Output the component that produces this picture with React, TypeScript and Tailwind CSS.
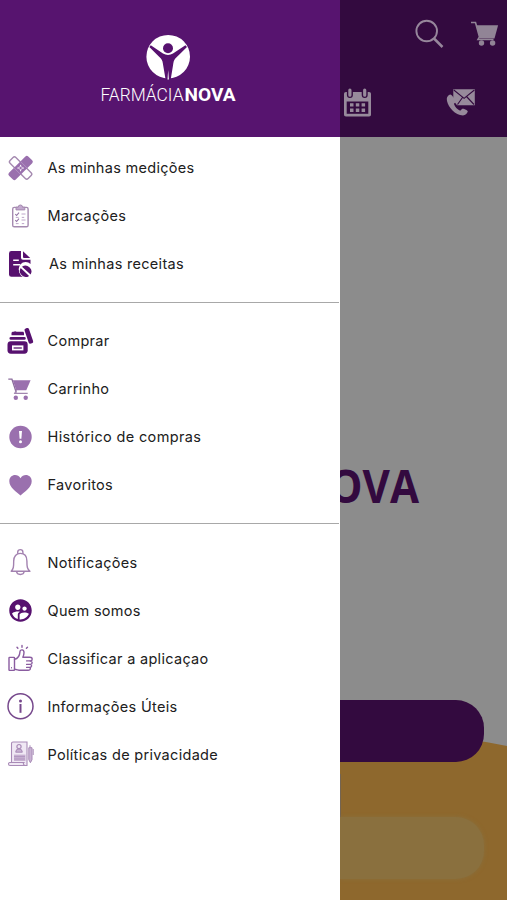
import type { ReactNode } from 'react';
import { MdSupervisedUserCircle } from 'react-icons/md';

const DARK = '#57116f';
const LILAC = '#9a70ae';

function Icon({ children }: { children: ReactNode }) {
  return (
    <svg viewBox="0 0 28 28" className="h-7 w-7 shrink-0" fill="none">
      {children}
    </svg>
  );
}

function BandageIcon() {
  return (
    <Icon>
      <g transform="rotate(45 14.6 14)">
        <rect x="1.8" y="9.9" width="25.6" height="8.2" rx="2" fill="#fff" stroke="#a58ab0" strokeWidth="1.4" />
      </g>
      <g transform="rotate(-45 14.6 14)">
        <rect x="1" y="9.2" width="27.2" height="9.6" rx="2" fill={LILAC} />
        <path d="M10 9.5v9M19.2 9.5v9" stroke="#b99bc7" strokeWidth="0.7" />
      </g>
      <path d="M14.6 11.2v.9M14.6 15.9v.9M11.8 14h.9M16.5 14h.9" stroke="#fff" strokeWidth="1.1" strokeLinecap="round" />
      <circle cx="14.6" cy="14" r="1.6" stroke="#e3d3ea" strokeWidth="0.8" />
    </Icon>
  );
}

function ClipboardIcon() {
  return (
    <Icon>
      <rect x="6.7" y="5.4" width="15.4" height="19.4" rx="1.6" stroke="#a58ab0" strokeWidth="1.4" />
      <path d="M10 7.9V5.2h2.2a2.2 2.2 0 0 1 4.4 0h2.2v2.700z" fill="#c3a9cf" stroke="#a58ab0" strokeWidth="1" strokeLinejoin="round" />
      <path d="M9.3 12.2l1.3 1.3 2.4-2.8M9.3 18.2l1.3 1.3 2.4-2.8" stroke="#9473a5" strokeWidth="1.1" />
      <path d="M15.5 12h4M9.8 15.4h2.8M15.8 15.4h2.4M15.5 18h4M9.8 21.6h2.8M15.8 21.6h2.4" stroke="#b79cc4" strokeWidth="0.9" />
    </Icon>
  );
}

function PrescriptionIcon() {
  return (
    <Icon>
      <path d="M5.4 1H15v6.8a2 2 0 0 0 2 2h7.5V14a7 7 0 0 0-9.6 10.2l2 2.6H5.4A2.4 2.4 0 0 1 3 24.400V3.400A2.400 2.400 0 0 1 5.400 1z" fill={DARK} />
      <path d="M17 1.200L24.200 8H18a1 1 0 0 1-1-1z" fill={DARK} />
      <path d="M7.200 10.200h5.600M7.200 14.800h7" stroke="#fff" strokeWidth="1.500" />
      <circle cx="19.900" cy="20.600" r="6.900" fill="#fff" />
      <path d="M16 16.800a5.900 5.900 0 0 1 8.600 7.700zM14.700 18a5.900 5.900 0 0 0 8.400 7.900z" fill={DARK} />
    </Icon>
  );
}

function JarIcon() {
  return (
    <Icon>
      <rect x="1.500" y="14.300" width="20.200" height="12.400" rx="3.400" fill={DARK} />
      <rect x="3.500" y="9.900" width="16.200" height="2.800" rx="1.300" fill={DARK} />
      <path d="M5.500 8.200V6.300c0-1.200 1-1.700 2.200-1.500.8-.8 2-.8 2.900 0h6c1 0 1.400.6 1.400 1.500v1.900z" fill={DARK} />
      <rect x="6" y="18.400" width="11.400" height="5" fill="#fff" />
      <path d="M7.600 21h8.200" stroke={DARK} strokeWidth="1.300" />
      <rect x="20.500" y="0.800" width="4.700" height="16" rx="1.800" fill={DARK} transform="rotate(-19 22.900 8.800)" />
    </Icon>
  );
}

function CartIcon() {
  return (
    <Icon>
      <path d="M2.300 4.100h3.600l4.400 13.500" stroke="#8c6c9d" strokeWidth="1.400" />
      <path d="M6.800 5.300h17.800l-4.300 9.900H10.200z" fill={LILAC} />
      <path d="M10.400 15l-1.700 3.300h13" stroke="#a287b0" strokeWidth="1.200" />
      <circle cx="9.800" cy="22.700" r="2.200" fill={LILAC} />
      <circle cx="19.700" cy="22.700" r="2.200" fill={LILAC} />
    </Icon>
  );
}

function AlertIcon() {
  return (
    <Icon>
      <circle cx="14.500" cy="14" r="11.200" fill={LILAC} />
      <path d="M13 7.900h3l-.6 7.800h-1.800z" fill="#fff" />
      <circle cx="14.500" cy="18.700" r="1.500" fill="#fff" />
    </Icon>
  );
}

function HeartIcon() {
  return (
    <Icon>
      <path d="M14.500 24.500C10.300 20.500 3.300 16.300 3.300 10.200c0-7 8.300-8.200 11.200-3 2.900-5.200 11.200-4 11.200 3 0 6.100-7 10.300-11.200 14.300z" fill={LILAC} />
    </Icon>
  );
}

function BellIcon() {
  return (
    <Icon>
      <g stroke="#a382b0" strokeWidth="1.400">
        <path d="M11.700 5.800V4.200a2.600 2.600 0 0 1 5.200 0v1.600" />
        <path d="M5.200 23.200c2.300-2.300 2.500-4.100 2.500-10.200 0-4.700 2.600-7.600 6.600-7.600s6.600 2.900 6.600 7.600c0 6.100.3 7.900 3 10.200z" strokeLinejoin="round" />
        <path d="M10.500 23.500c.5 3.900 7.200 3.900 7.700 0" />
      </g>
    </Icon>
  );
}

function PeopleIcon() {
  return (
    <span className="-mr-px flex h-7 w-[29px] shrink-0 items-center justify-center">
      <MdSupervisedUserCircle className="h-[27px] w-[27px] text-[#57116f]" />
    </span>
  );
}

function ThumbIcon() {
  return (
    <Icon>
      <g stroke="#8a5ca0" strokeWidth="1.400" strokeLinejoin="round" strokeLinecap="round">
        <rect x="3" y="13.400" width="5.500" height="13" rx=".6" />
        <path d="M8.500 15.200c3-.5 5.200-3 5.500-7.600.2-2.500 4-2.300 4 .8 0 2-.5 3.400-1.200 4.800h7c3.200 0 3 3.500.5 3.800 2.600.2 2.300 3.300 0 3.400 1.900.3 1.700 3-.5 3 1.200 1 .5 2.900-1.500 2.900h-7.800c-2.500 0-3.500-1-6-1" />
        <path d="M20.500 16.900h3.500M20.500 20.400h3.500M20.500 23.400h3" strokeWidth="1.100" />
        <path d="M16 3.300V1.400M11.900 4.300l-.9-1.100M20.400 4.300l1.100-1.100" />
        <path d="M5.500 23.500v.5" strokeWidth="1" />
      </g>
    </Icon>
  );
}

function InfoIcon() {
  return (
    <Icon>
      <circle cx="14.500" cy="14.200" r="12.500" stroke="#76488c" strokeWidth="1.500" />
      <circle cx="14.500" cy="8.900" r="1.500" fill="#76488c" />
      <path d="M14.500 12v8.800" stroke="#76488c" strokeWidth="2" />
    </Icon>
  );
}

function PolicyIcon() {
  return (
    <Icon>
      <path d="M5.500 22.500V3.500c0-1 .6-1.500 1.500-1.500h14v23.500H4c-2 0-2-3-.2-3h14c-1 1 0 3 1.500 3" fill="#f0e8f4" stroke="#a98bb7" strokeWidth="1.100" />
      <path d="M9.700 12.200a3.300 3.300 0 0 1 6.600 0z" fill="#c7b1d1" stroke="#a98bb7" />
      <circle cx="13" cy="6.600" r="2.100" stroke="#a98bb7" strokeWidth="1.200" />
      <rect x="8" y="14.600" width="11.500" height="6.400" fill="#c7b1d1" />
      <path d="M8 16.600h11M8 19h11" stroke="#a98bb7" strokeWidth=".7" />
      <path d="M22.800 7.700h3.200v12l-1.600 3-1.600-3z" fill="#c9b3d3" stroke="#a98bb7" />
      <path d="M24 7.500V5.300M27.200 9v6" stroke="#a98bb7" />
    </Icon>
  );
}

interface Entry {
  label: string;
  icon: ReactNode;
  className: string;
}

const groups: Entry[][] = [
  [
    { label: 'As minhas medições', icon: <BandageIcon />, className: 'ml-[13.500px]' },
    { label: 'Marcações', icon: <ClipboardIcon />, className: 'ml-[13.500px]' },
    { label: 'As minhas receitas', icon: <PrescriptionIcon />, className: 'ml-[15px]' },
  ],
  [
    { label: 'Comprar', icon: <JarIcon />, className: 'ml-[13.500px]' },
    { label: 'Carrinho', icon: <CartIcon />, className: 'ml-[13.500px]' },
    { label: 'Histórico de compras', icon: <AlertIcon />, className: 'ml-[13.500px] tracking-[0.350px]' },
    { label: 'Favoritos', icon: <HeartIcon />, className: 'ml-[13.500px]' },
  ],
  [
    { label: 'Notificações', icon: <BellIcon />, className: 'ml-[13.500px] pt-px' },
    { label: 'Quem somos', icon: <PeopleIcon />, className: 'ml-[13.500px] pt-px' },
    { label: 'Classificar a aplicaçao', icon: <ThumbIcon />, className: 'ml-[13.500px] pt-px' },
    { label: 'Informações Úteis', icon: <InfoIcon />, className: 'ml-[13.500px] pt-px' },
    { label: 'Políticas de privacidade', icon: <PolicyIcon />, className: 'ml-[13.500px] pt-px' },
  ],
];

function Logo() {
  return (
    <svg viewBox="0 0 140 72" className="h-[72px] w-[140px]">
      <circle cx="70.200" cy="23.700" r="21.800" fill="#fff" />
      <circle cx="70" cy="15.300" r="5" fill={DARK} />
      <path d="M52.800 12.200L65 20.600c3 1.700 7 1.700 10 0L87.400 12.200l1.600 1.900L77.300 25.500c-1.600 1.700-1.900 4-2.300 7L72.700 46.500H67.600L65.200 32.500c-.4-3-.7-5.300-2.300-7L51.300 14.100z" fill={DARK} />
      <path d="M70.200 37L69.500 46.500h1.400z" fill="#fff" />
      <text x="2.500" y="67.700" fontFamily="Roboto, sans-serif" fontSize="18.500" fontWeight="300" fill="#fff" textLength="83" lengthAdjust="spacingAndGlyphs">FARMÁCIA</text>
      <text x="86.500" y="67.700" fontFamily="Roboto, sans-serif" fontSize="18.500" fontWeight="700" fill="#fff" textLength="51" lengthAdjust="spacingAndGlyphs">NOVA</text>
    </svg>
  );
}

function Drawer() {
  return (
    <aside className="flex w-[340px] shrink-0 flex-col bg-white">
      <header className="flex h-[137px] justify-center bg-[#57146f] pt-[33px] pr-1">
        <Logo />
      </header>
      <nav className="flex flex-col pt-[7px]">
        {groups.map((entries, index) => (
          <div key={entries[0].label}>
            {index > 0 && <div className="mr-px mt-[13.500px] mb-3.5 h-[1.500px] bg-[#a8a8a8]" />}
            {entries.map((entry) => (
              <a key={entry.label} className="flex h-12 items-center pl-1.5">
                {entry.icon}
                <span className={`${entry.className} text-[14.500px] tracking-[0.300px] whitespace-nowrap text-[#202020]`}>
                  {entry.label}
                </span>
              </a>
            ))}
          </div>
        ))}
      </nav>
    </aside>
  );
}

function TopBar() {
  return (
    <header className="h-[137px] bg-[#330a3f]">
      <svg viewBox="0 0 167 137" className="h-full w-full" fill="none">
        <g stroke="#97879c">
          <circle cx="86.700" cy="31" r="10.300" strokeWidth="1.900" />
          <path d="M94 38.500l8.500 8.500" strokeWidth="2.500" />
        </g>
        <g stroke="#918496" strokeWidth="1.600">
          <path d="M131 22.500h4.500l4 14.500-1.500 2.500h15.500" />
          <path d="M136.500 25.300h21.600l-3.600 13.200H140z" fill="#918496" stroke="none" />
          <circle cx="141.500" cy="43" r="2.700" fill="#918496" stroke="none" />
          <circle cx="152.600" cy="43" r="2.700" fill="#918496" stroke="none" />
        </g>
        <g>
          <path d="M6 92h23c1.300 0 2 .7 2 2v20.500c0 1.300-.7 2-2 2H6c-1.300 0-2-.7-2-2V94c0-1.300.7-2 2-2z" fill="#978a9b" />
          <path d="M6.700 101.500h21.600v12.300H6.700z" fill="#330a3f" />
          <path d="M9.900 90v5M24.700 90v5" stroke="#330a3f" strokeWidth="6" strokeLinecap="round" />
          <path d="M9.900 90v5.200M24.700 90v5.200" stroke="#978a9b" strokeWidth="3.200" strokeLinecap="round" />
          <path d="M10 103.300h3.500v3.300H10zM15.800 103.300h3.500v3.300h-3.500zM21.600 103.300h3.500v3.300h-3.500zM10 108.600h3.500v3.300H10zM15.800 108.600h3.500v3.300h-3.500zM21.600 108.600h3.500v3.300h-3.500z" fill="#978a9b" />
        </g>
        <g>
          <path d="M110 94.500c-2.500 1-3.800 3.200-3 6.500 1.500 6.500 8 14 16 14.400 2.300 0 4-1.600 4.800-3.800.3-1-4.800-3.700-5.800-2.600l-1.800 1.700c-3-1.200-5.300-4-6.300-7l1.800-1.500c.8-1-3.800-8.100-5.700-7.700z" fill="#978a9b" />
          <path d="M113.300 89.300h21.500v16h-17.800l-3.700-5z" fill="#978a9b" />
          <path d="M113.800 90l10.300 8.400L134.400 90M117.500 104.500l5-7M134 104.500l-7.500-8" stroke="#330a3f" strokeWidth="1.100" />
        </g>
      </svg>
    </header>
  );
}

function HomeScreen() {
  return (
    <main className="flex min-w-0 flex-1 flex-col overflow-hidden bg-[#8c8c8c]">
      <TopBar />
      <div className="h-[563px] shrink-0 pt-[313px]">
        <svg viewBox="0 0 167 74" className="h-[74px] w-[167px]">
          <text x="-11" y="52.700" fontFamily="'Open Sans', sans-serif" fontSize="47" fontWeight="700" fill="#330a3f" textLength="90" lengthAdjust="spacingAndGlyphs">OVA</text>
        </svg>
      </div>
      <div className="relative flex-1">
        <svg viewBox="0 0 167 200" className="absolute inset-0 h-full w-full">
          <path d="M0 30C60 33 115 35 167 46v154H0z" fill="#8e682d" />
          <path d="M0 74v62" stroke="#746451" strokeWidth="2" />
        </svg>
        <div className="relative mr-[23px] h-[62px] rounded-r-[28px] bg-[#330a3f]" />
        <div className="relative mt-[55px] mr-[23px] h-[62px] rounded-r-[28px] bg-[#8a703e] shadow-[0_0_4px_#8a703e]" />
      </div>
    </main>
  );
}

export default function App() {
  return (
    <div className="flex h-[900px] w-[507px] overflow-hidden bg-white font-[Inter,sans-serif]">
      <Drawer />
      <HomeScreen />
    </div>
  );
}
